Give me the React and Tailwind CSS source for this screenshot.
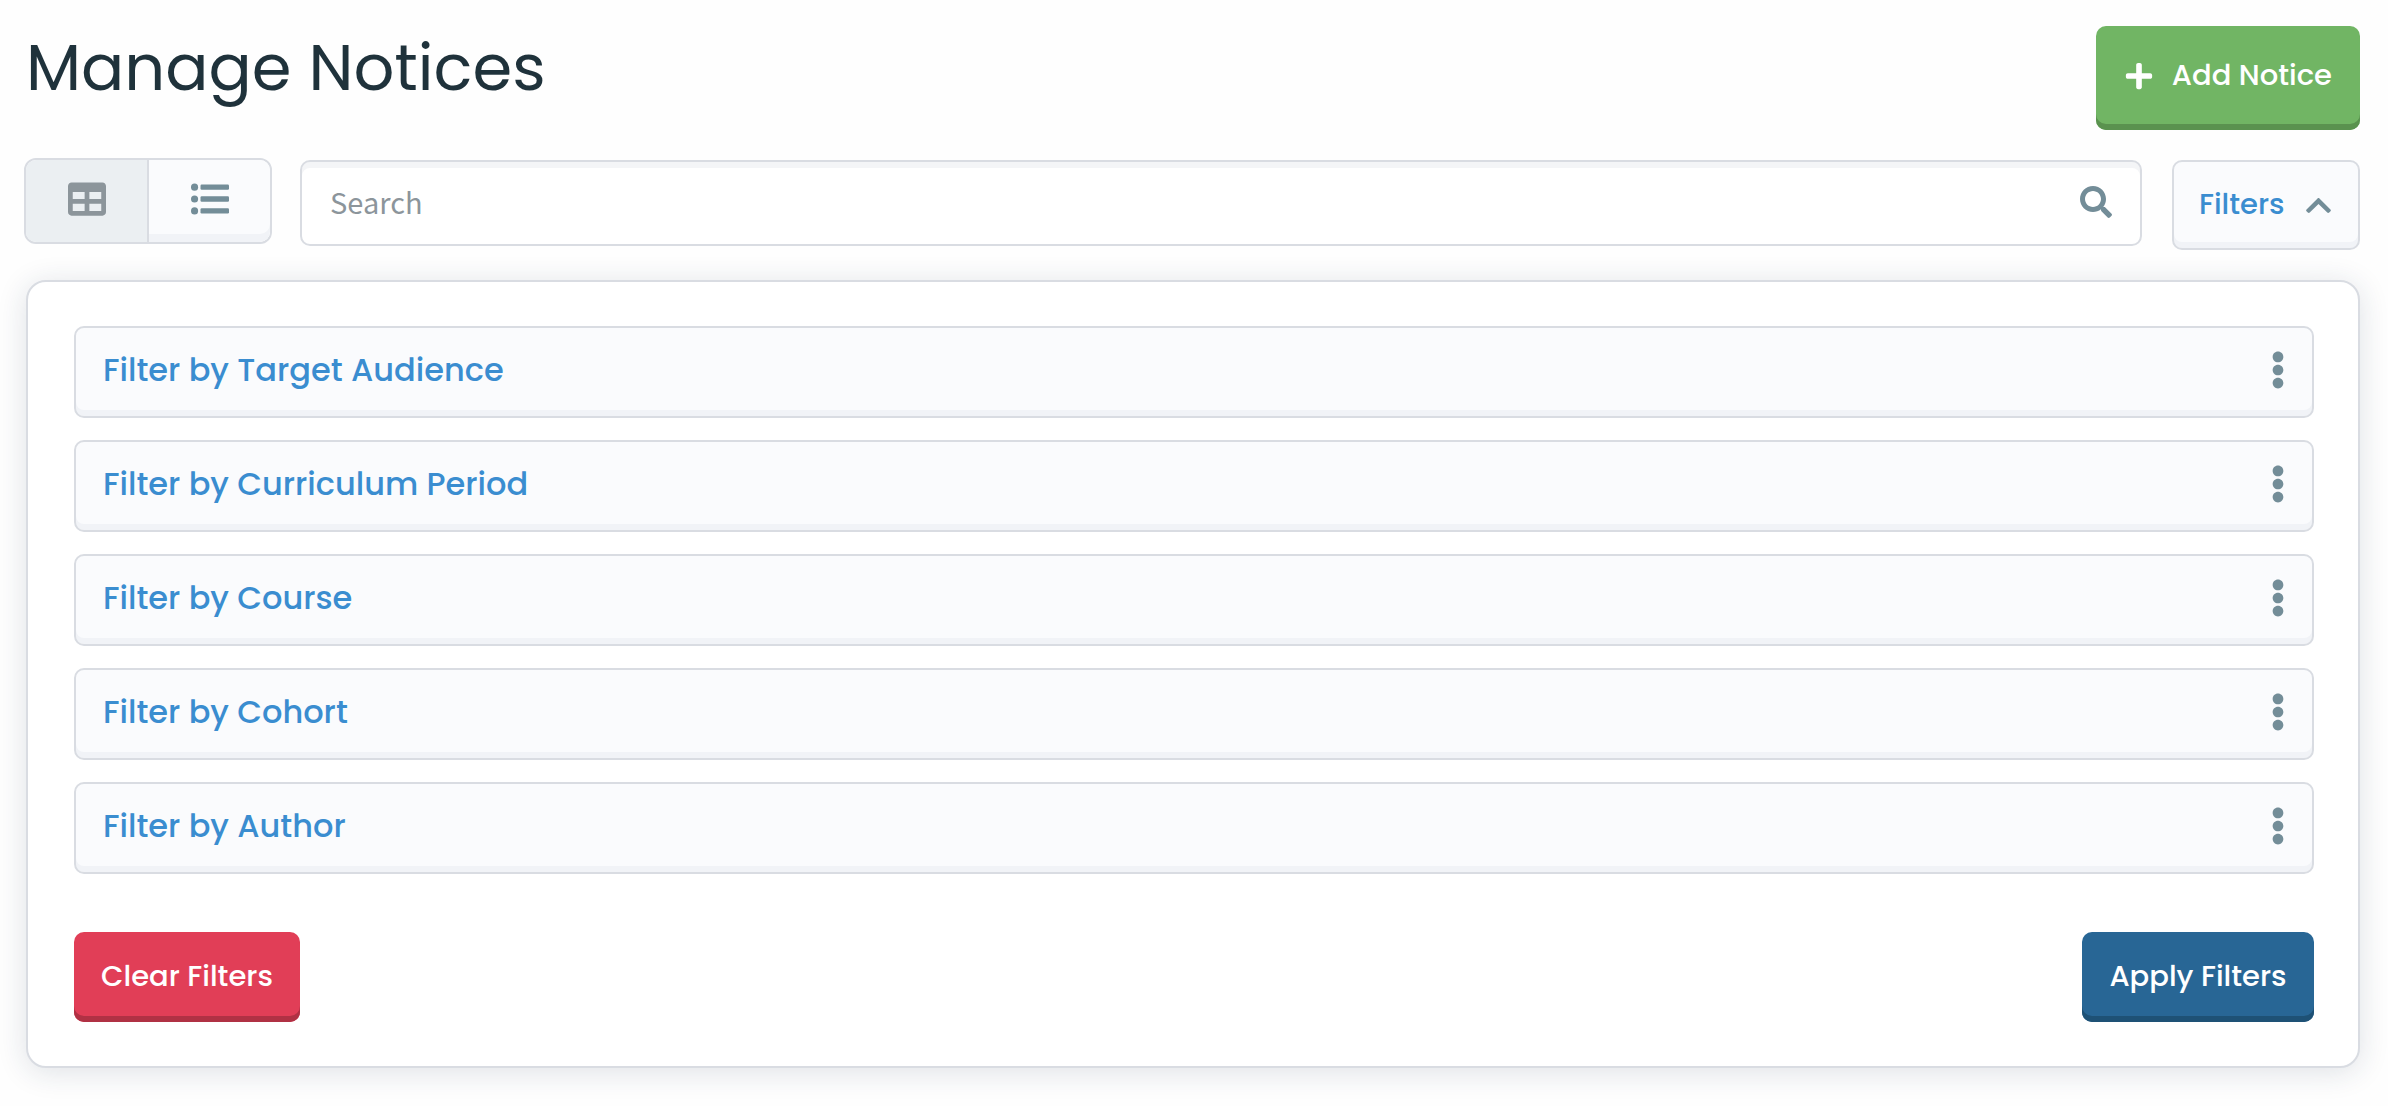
import React, { useState } from 'react';
import { FaChevronUp, FaEllipsisV, FaPlus, FaSearch, FaTable } from 'react-icons/fa';

const FILTERS = [
    { id: 'audience', label: 'Filter by Target Audience' },
    { id: 'period', label: 'Filter by Curriculum Period' },
    { id: 'course', label: 'Filter by Course' },
    { id: 'cohort', label: 'Filter by Cohort' },
    { id: 'author', label: 'Filter by Author' },
];

// Bulleted list with heavier bars than the stock icon
const ListIcon = () => (
    <svg width="38" height="38" viewBox="0 0 512 512" fill="currentColor" aria-hidden="true">
        <circle cx="48" cy="96" r="48" />
        <circle cx="48" cy="256" r="48" />
        <circle cx="48" cy="416" r="48" />
        <rect x="128" y="60" width="384" height="72" rx="16" />
        <rect x="128" y="220" width="384" height="72" rx="16" />
        <rect x="128" y="380" width="384" height="72" rx="16" />
    </svg>
);

const FilterRow = ({ label }) => (
    <button
        type="button"
        className="flex h-[92px] w-full cursor-pointer items-center justify-between rounded-[10px] border-2 border-[#d9dce2] bg-[#fafbfd] pr-[26px] pb-1 pl-[27px] text-[32px] font-medium text-[#3a8dd0] shadow-[inset_0_-6px_0_#f1f3f7]"
    >
        <span>{label}</span>
        <FaEllipsisV size={38} className="w-4 text-[#738d98]" />
    </button>
);

export default function App() {
    const [view, setView] = useState('table');
    const [query, setQuery] = useState('');
    const [open, setOpen] = useState(true);

    return (
        <main className="bg-[#fefefe] pt-[26px] pr-7 pb-[38px] pl-6 font-[Poppins,Inter,sans-serif]">
            {/* Page header */}
            <header className="flex items-start justify-between">
                <h1 className="pl-0.5 text-[64px] leading-[84px] text-[#1f323b]">Manage Notices</h1>
                <button
                    type="button"
                    className="flex h-[104px] w-[264px] cursor-pointer items-center justify-between rounded-[10px] bg-[#71b564] px-7 pb-1 text-[29px] font-medium text-white shadow-[inset_0_-6px_0_#5a924f]"
                >
                    <FaPlus size={30} />
                    Add Notice
                </button>
            </header>

            {/* Toolbar */}
            <div className="mt-7 flex items-start">
                <div className="flex h-[86px] w-[248px] shrink-0 overflow-hidden rounded-xl border-2 border-[#d9dce2]">
                    <button
                        type="button"
                        aria-label="Table view"
                        aria-pressed={view === 'table'}
                        onClick={() => setView('table')}
                        className="flex flex-1 cursor-pointer items-center justify-center border-r-2 border-[#d9dce2] bg-[#ebeff2] pb-1 text-[#8c959b]"
                    >
                        <FaTable size={38} />
                    </button>
                    <button
                        type="button"
                        aria-label="List view"
                        aria-pressed={view === 'list'}
                        onClick={() => setView('list')}
                        className="flex flex-1 cursor-pointer items-center justify-center rounded-br-[10px] bg-[#fafbfd] pb-1 text-[#738d98] shadow-[inset_0_-8px_0_#f1f3f7]"
                    >
                        <ListIcon />
                    </button>
                </div>

                <div className="mt-0.5 ml-7 flex h-[86px] flex-1 items-center rounded-[10px] border-2 border-[#d9dce2] bg-white px-7 pb-0.5 shadow-[inset_0_6px_0_#f4f5f7]">
                    <input
                        type="text"
                        aria-label="Search"
                        placeholder="Search"
                        value={query}
                        onChange={(e) => setQuery(e.target.value)}
                        className="min-w-0 flex-1 bg-transparent font-['Source_Sans_Pro','Noto_Sans_CJK_SC',sans-serif] text-[29px] text-[#1f323b] outline-none placeholder:text-[#8c959b]"
                    />
                    <FaSearch size={32} className="text-[#738d98]" />
                </div>

                <button
                    type="button"
                    aria-expanded={open}
                    onClick={() => setOpen(!open)}
                    className="mt-0.5 ml-[30px] flex h-[90px] w-[188px] shrink-0 cursor-pointer items-center justify-between rounded-[10px] border-2 border-[#d9dce2] bg-[#fafbfd] px-[25px] text-[29px] font-medium text-[#3a8dd0] shadow-[inset_0_-6px_0_#f1f3f7]"
                >
                    Filters
                    <FaChevronUp size={29} className="text-[#738d98]" />
                </button>
            </div>

            {/* Filter panel */}
            {open && (
                <section className="mt-[30px] ml-0.5 rounded-[20px] border-2 border-[#d9dce2] bg-white py-11 pr-11 pl-[46px] shadow-[0_4px_30px_rgba(31,50,75,0.14)]">
                    <div className="flex flex-col gap-[22px]">
                        {FILTERS.map((filter) => (
                            <FilterRow key={filter.id} label={filter.label} />
                        ))}
                    </div>
                    <div className="mt-[58px] flex justify-between">
                        <button
                            type="button"
                            className="h-[90px] w-[226px] cursor-pointer rounded-[10px] bg-[#e13e57] text-[29px] font-medium text-white shadow-[inset_0_-6px_0_#b03144]"
                        >
                            Clear Filters
                        </button>
                        <button
                            type="button"
                            className="h-[90px] w-[232px] cursor-pointer rounded-[10px] bg-[#286695] text-[29px] font-medium text-white shadow-[inset_0_-6px_0_#1e5175]"
                        >
                            Apply Filters
                        </button>
                    </div>
                </section>
            )}
        </main>
    );
}
